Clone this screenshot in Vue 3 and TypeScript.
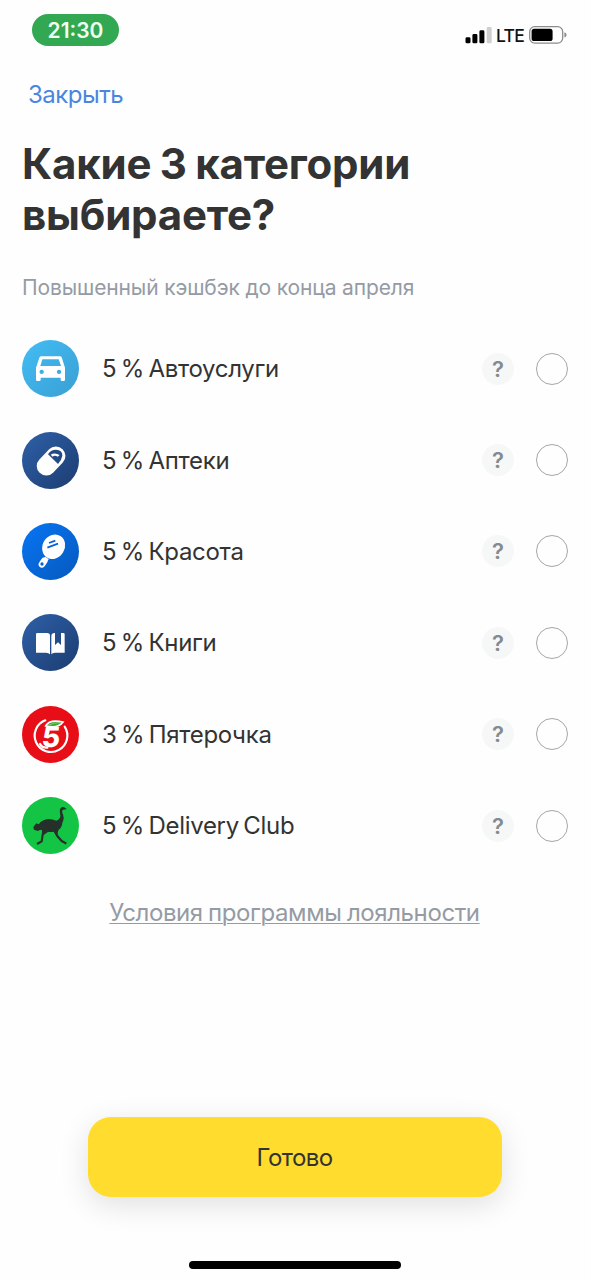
<script setup lang="ts">
import { ref } from 'vue'

interface Category {
  id: string
  label: string
}

const categories: Category[] = [
  { id: 'auto', label: '5 % Автоуслуги' },
  { id: 'pharmacy', label: '5 % Аптеки' },
  { id: 'beauty', label: '5 % Красота' },
  { id: 'books', label: '5 % Книги' },
  { id: 'pyaterochka', label: '3 % Пятерочка' },
  { id: 'delivery', label: '5 % Delivery Club' },
]

const selected = ref<string[]>([])

function toggle(id: string) {
  if (selected.value.includes(id)) {
    selected.value = selected.value.filter((item) => item !== id)
  } else if (selected.value.length < 3) {
    selected.value = [...selected.value, id]
  }
}
</script>

<template>
  <main class="screen">
    <header class="status">
      <span class="clock">21:30</span>
      <div class="indicators">
        <svg class="signal" width="27" height="18" viewBox="0 0 27 18">
          <rect x="0.5" y="11.3" width="5" height="6" rx="1.4" />
          <rect x="7.4" y="8" width="5" height="9.3" rx="1.4" />
          <rect x="14.4" y="4.3" width="5" height="13" rx="1.4" />
          <rect x="21.7" y="1" width="5" height="16.3" rx="1.4" fill="#cfcfcf" />
        </svg>
        <span class="network">LTE</span>
        <svg class="battery" width="38" height="18" viewBox="0 0 38 18">
          <rect x="0.7" y="0.7" width="33" height="16.4" rx="5" fill="none" stroke="#8c8c8c" stroke-width="1.3" />
          <rect x="2.6" y="2.8" width="21" height="12.2" rx="2.6" />
          <path d="M35.4 6.2q2.2 .8 2.2 2.7t-2.2 2.7z" fill="#8c8c8c" />
        </svg>
      </div>
    </header>

    <nav class="nav"><a class="close">Закрыть</a></nav>

    <h1 class="title">Какие 3 категории<br />выбираете?</h1>
    <p class="subtitle">Повышенный кэшбэк до конца апреля</p>

    <ul class="list">
      <li v-for="category in categories" :key="category.id" class="row" @click="toggle(category.id)">
        <span class="icon" :class="category.id">
          <svg v-if="category.id === 'auto'" viewBox="0 0 171 171">
            <path
              fill="#fff"
              fill-rule="evenodd"
              d="M58 49H114Q118 49 119.500 53L129 83V119Q129 123 125 123H120Q116 123 116 119V113H56V119Q56 123 52 123H46Q42 123 42 119V83L52 53Q53.500 49 58 49ZM61 58L55 78H117L110 58ZM59 89a6.500 6.500 0 1 0 .1 0ZM111 89a6.500 6.500 0 1 0 .1 0Z"
            />
          </svg>
          <svg v-else-if="category.id === 'pharmacy'" viewBox="0 0 171 171">
            <rect x="38" y="58" width="99" height="57" rx="28.500" fill="#fff" transform="rotate(-46 88 87)" />
            <path d="M78 67Q85 53 102 53Q122 54 121 71Q119 84 108 96Z" fill="#244a84" />
            <path d="M86 68Q98 60 113 69L107 74Q98 68 92 74Z" fill="#fff" />
          </svg>
          <svg v-else-if="category.id === 'beauty'" viewBox="0 0 171 171">
            <ellipse cx="95" cy="71" rx="33" ry="38" fill="#fff" transform="rotate(32 95 71)" />
            <path d="M81 60L100 53M76 74L108 62" stroke="#0864d2" stroke-width="5.500" />
            <path d="M67 113L60 124" stroke="#fff" stroke-width="20" stroke-linecap="round" />
            <path d="M75 105L70 112" stroke="#fff" stroke-width="13" />
            <circle cx="60" cy="123" r="5" fill="#0864d2" />
          </svg>
          <svg v-else-if="category.id === 'books'" viewBox="0 0 171 171">
            <path d="M46 57H75Q84 57 84 65V121Q80 116 72 116H42V61Q42 57 46 57Z" fill="#fff" />
            <path d="M88 65Q89 57 97 57H99V93L108 85L117 93V57H124Q128 57 128 61V116H99Q91 116 88 121Z" fill="#fff" />
          </svg>
          <svg v-else-if="category.id === 'pyaterochka'" viewBox="0 0 171 171">
            <path d="M70 43A49 49 0 1 0 128 62" fill="none" stroke="#fff" stroke-width="6.500" stroke-linecap="round" />
            <text class="five" transform="translate(57 124) skewX(-6)">5</text>
            <path d="M54 114Q60 126 76 125" fill="none" stroke="#fff" stroke-width="7" stroke-linecap="round" />
            <path d="M71 60Q82 39 123 48Q109 68 71 60Z" fill="#36a536" stroke="#fff" stroke-width="5" />
            <path d="M79 57Q98 50 114 50" fill="none" stroke="#b9e08e" stroke-width="2" />
          </svg>
          <svg v-else viewBox="0 0 171 171">
            <g fill="#25302a">
              <path
                d="M114 49C112 36 116 29 124 30Q130 31 134 37L123 38Q119 41 121 48Q129 62 121 78C119 94 110 102 95 104Q80 107 66 102L56 98L47 102L36 98L34 90L43 79L50 82Q61 67 80 66Q92 66 103 71Q119 66 114 49Z"
              />
              <path d="M60 98L82 102L66 113L60 116ZM92 100L110 97L106 112L110 121L103 117Z" />
            </g>
            <path
              d="M68 99L62 113L59 133L45 141M98 99L106 117L119 132L133 140"
              fill="none"
              stroke="#25302a"
              stroke-width="6.500"
              stroke-linejoin="round"
            />
          </svg>
        </span>
        <span class="label">{{ category.label }}</span>
        <button class="help" type="button" @click.stop>?</button>
        <span class="radio" :class="{ checked: selected.includes(category.id) }"></span>
      </li>
    </ul>

    <a class="terms">Условия программы лояльности</a>

    <footer class="footer">
      <button class="done" type="button">Готово</button>
      <div class="home"></div>
    </footer>
  </main>
</template>

<style>
body {
  margin: 0;
  background: #fff;
}
</style>

<style scoped>
.screen {
  box-sizing: border-box;
  width: 591px;
  height: 1280px;
  display: flex;
  flex-direction: column;
  overflow: hidden;
  background: #fefefe;
  color: #333;
  font-family: Inter, 'Liberation Sans', sans-serif;
}
.status {
  display: flex;
  justify-content: space-between;
  align-items: flex-start;
  height: 62px;
  padding: 14px 24px 0 32px;
  box-sizing: border-box;
}
.clock {
  width: 87px;
  height: 32px;
  border-radius: 16px;
  background: #32a852;
  color: #effff0;
  font-size: 21px;
  font-weight: 600;
  line-height: 33px;
  text-align: center;
}
.indicators {
  display: flex;
  align-items: center;
  height: 18px;
  margin-top: 12px;
}
.network {
  width: 36px;
  padding-top: 2px;
  box-sizing: border-box;
  margin-right: 1px;
  color: #111;
  font-size: 17.5px;
  font-weight: 500;
  letter-spacing: -0.8px;
  line-height: 18px;
  text-align: center;
}
.nav {
  height: 66px;
  padding: 0 28px;
  line-height: 66px;
}
.close {
  color: #4a86e0;
  font-size: 24px;
  letter-spacing: -0.5px;
}
.title {
  margin: 10px 22px 0;
  font-size: 42px;
  font-weight: 700;
  letter-spacing: -0.2px;
  word-spacing: -1.2px;
  line-height: 51px;
  white-space: nowrap;
}
.subtitle {
  margin: 32px 22px 0;
  color: #959ba4;
  font-size: 21px;
  letter-spacing: -0.13px;
  line-height: 31px;
  white-space: nowrap;
}
.list {
  margin: 20px 0 0;
  padding: 0;
  list-style: none;
}
.row {
  display: flex;
  align-items: center;
  height: 91.4px;
  padding: 0 23px 0 22px;
}
.icon {
  width: 57px;
  height: 57px;
  margin-right: 23px;
  border-radius: 50%;
}
.icon svg {
  display: block;
  width: 57px;
  height: 57px;
}
.auto { background: linear-gradient(135deg, #42bdf5, #3a9fd3); }
.pharmacy { background: linear-gradient(135deg, #2e60a8, #1c3d70); }
.beauty { background: linear-gradient(135deg, #0875f4, #0659bd); }
.books { background: linear-gradient(135deg, #2e60a8, #1c3d70); }
.pyaterochka { background: #e80e18; }
.delivery { background: #14c445; }
.five {
  fill: #fff;
  font-family: Inter, sans-serif;
  font-size: 84px;
  font-weight: 800;
}
.label {
  flex: 1;
  padding-top: 1px;
  font-size: 24px;
  letter-spacing: -0.3px;
  word-spacing: -2px;
  line-height: 32px;
  white-space: nowrap;
}
.help {
  width: 32px;
  height: 32px;
  margin-right: 22px;
  padding: 0;
  border: 0;
  border-radius: 50%;
  background: #f6f8f8;
  color: #858a90;
  font-family: inherit;
  font-size: 22px;
  font-weight: 600;
  line-height: 32px;
  text-align: center;
}
.radio {
  box-sizing: border-box;
  width: 32px;
  height: 32px;
  border: 1px solid #a6a6a6;
  border-radius: 50%;
}
.radio.checked {
  border: 9px solid #ffdd2d;
}
.terms {
  align-self: center;
  margin: 26px 2px 0 0;
  color: #959ba4;
  font-size: 24px;
  letter-spacing: -0.4px;
  word-spacing: -1px;
  line-height: 32px;
  text-decoration: underline;
  text-decoration-thickness: 1px;
  text-underline-offset: 2px;
  white-space: nowrap;
}
.footer {
  display: flex;
  flex-direction: column;
  align-items: center;
  margin-top: auto;
  padding: 0 2px 11px 0;
}
.done {
  width: 414px;
  height: 80px;
  padding: 0;
  border: 0;
  border-radius: 23px;
  background: #ffdc2d;
  box-shadow: 0 8px 30px rgba(0, 0, 0, 0.12);
  color: #333;
  font-family: inherit;
  font-size: 24px;
  letter-spacing: -0.6px;
}
.home {
  width: 212px;
  height: 8px;
  margin-top: 64px;
  border-radius: 4px;
  background: #000;
}
</style>
